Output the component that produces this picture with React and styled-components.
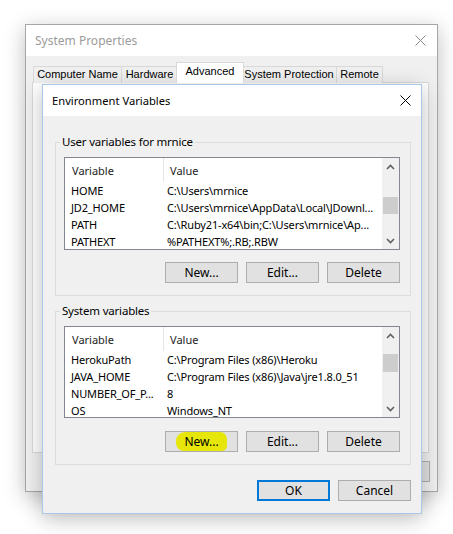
import styled, { createGlobalStyle } from 'styled-components';

const UI = `"Noto Sans", "Segoe UI", sans-serif`;
const CLASSIC = `"Liberation Sans", Arial, sans-serif`;

const GlobalStyle = createGlobalStyle`
  html, body { margin: 0; padding: 0; background: #fff; }
  body { font-family: ${UI}; font-size: 11px; color: #000; }
  * { box-sizing: border-box; }
`;

const Desktop = styled.div`
  position: relative;
  width: 453px;
  height: 534px;
  overflow: hidden;
  background: #fff;
`;

// windows sit on a free canvas, so they get coordinates
const Window = styled.div`
  position: absolute;
  left: ${(p) => p.$x}px;
  top: ${(p) => p.$y}px;
  width: ${(p) => p.$w}px;
  height: ${(p) => p.$h}px;
  display: flex;
  flex-direction: column;
  background: #f0f0f0;
  border: 1px solid ${(p) => (p.$active ? '#a9c8e8' : '#a6a6a6')};
  box-shadow: 0 5px 20px rgba(0, 0, 0, 0.26);
`;

const TitleBar = styled.div`
  height: 31px;
  flex: none;
  display: flex;
  align-items: center;
  background: #fff;
  padding-left: 9px;
`;

const Title = styled.div`
  flex: 1;
  font-size: ${(p) => (p.$active ? 11.2 : 12)}px;
  color: ${(p) => (p.$active ? '#000' : '#9b9b9b')};
`;

const CloseButton = styled.div`
  width: 31px;
  height: 31px;
  margin-right: ${(p) => (p.$active ? 0 : 1)}px;
  display: flex;
  align-items: center;
  justify-content: center;
`;

const TabRow = styled.div`
  display: flex;
  align-items: flex-end;
  height: 27px;
  padding: 0 0 0 8px;
`;

const Tab = styled.div`
  position: relative;
  width: ${(p) => p.$w}px;
  height: ${(p) => (p.$selected ? 21 : 17)}px;
  margin: ${(p) => (p.$selected ? '0 -2px 0 -2px' : '0 0 0 -1px')};
  z-index: ${(p) => (p.$selected ? 1 : 0)};
  border: 1px solid #d9d9d9;
  border-bottom: none;
  background: ${(p) => (p.$selected ? '#fff' : '#f0f0f0')};
  font-family: ${CLASSIC};
  font-size: 11px;
  line-height: ${(p) => (p.$selected ? 16 : 15)}px;
  text-align: center;
  white-space: nowrap;
`;

const TabPanel = styled.div`
  height: 371px;
  margin: -1px 8px 0 6px;
  border: 1px solid #d9d9d9;
  background: #fff;
`;

const OuterButtons = styled.div`
  display: flex;
  justify-content: flex-end;
  gap: 6px;
  margin-top: 8px;
  padding-right: 7px;
`;

const Body = styled.div`
  display: flex;
  flex-direction: column;
  padding: 18px 10px 0 12px;
`;

const Group = styled.fieldset`
  margin: ${(p) => (p.$first ? 0 : '7px 0 0 0')};
  padding: 7px 10px 12px 8px;
  border: 1px solid #dcdcdc;
  min-width: 0;
`;

const Legend = styled.legend`
  margin-left: -4px;
  padding: 0 2px;
  font-size: 11.5px;
  letter-spacing: -0.2px;
  line-height: 16px;
`;

const ListView = styled.div`
  display: flex;
  height: ${(p) => p.$h}px;
  border: 1px solid #828790;
  background: #fff;
`;

const ListBody = styled.div`
  flex: 1;
  min-width: 0;
  overflow: hidden;
`;

const HeaderRow = styled.div`
  display: grid;
  grid-template-columns: 99px 1fr;
  height: 24px;
`;

const HeaderCell = styled.div`
  display: flex;
  align-items: center;
  padding-left: ${(p) => (p.$first ? 7 : 6)}px;
  border-right: ${(p) => (p.$first ? '1px solid #e5e5e5' : 'none')};
  color: #222;
  font-size: 11px;
`;

const Row = styled.div`
  display: grid;
  grid-template-columns: 99px 1fr;
  height: 17px;
  align-items: center;
`;

const Cell = styled.div`
  padding-left: ${(p) => (p.$first ? 6 : 3)}px;
  white-space: nowrap;
  font-size: 11px;
  letter-spacing: -0.15px;
`;

const ScrollBar = styled.div`
  width: 17px;
  flex: none;
  display: flex;
  flex-direction: column;
  background: #f0f0f0;
`;

const Arrow = styled.div`
  height: 17px;
  flex: none;
  display: flex;
  align-items: center;
  justify-content: center;
`;

const Track = styled.div`
  flex: 1;
`;

const Thumb = styled.div`
  margin: ${(p) => p.$top}px 1px 0 1px;
  height: ${(p) => p.$h}px;
  background: #cdcdcd;
`;

const ButtonRow = styled.div`
  display: flex;
  justify-content: flex-end;
  gap: 8px;
  margin-top: ${(p) => p.$top}px;
`;

const Button = styled.div`
  width: ${(p) => p.$w || 73}px;
  height: 21px;
  display: flex;
  align-items: center;
  justify-content: center;
  background: #e1e1e1;
  border: ${(p) => (p.$primary ? '2px solid #0078d7' : '1px solid #adadad')};
  font-size: 12px;
`;

const Footer = styled.div`
  display: flex;
  justify-content: flex-end;
  gap: 8px;
  margin-top: 15px;
`;

const Highlight = styled.span`
  display: inline-block;
  height: 19px;
  line-height: 19px;
  padding: 0 8px 0 8px;
  background: #e6e60a;
  border-radius: 9px 7px 5px 8px;
`;

const XIcon = ({ color }) => (
  <svg width="11" height="11" viewBox="0 0 11 11">
    <path d="M0.5 0.5 L10.5 10.5 M10.5 0.5 L0.5 10.5" stroke={color} strokeWidth="1" />
  </svg>
);

const Chevron = ({ down }) => (
  <svg width="9" height="6" viewBox="0 0 9 6">
    <polyline
      points={down ? '1,1 4.5,4.5 8,1' : '1,5 4.5,1.5 8,5'}
      fill="none"
      stroke="#606060"
      strokeWidth="1.6"
    />
  </svg>
);

const userVars = [
  ['HOME', 'C:\\Users\\mrnice'],
  ['JD2_HOME', 'C:\\Users\\mrnice\\AppData\\Local\\JDownl...'],
  ['PATH', 'C:\\Ruby21-x64\\bin;C:\\Users\\mrnice\\Ap...'],
  ['PATHEXT', '%PATHEXT%;.RB;.RBW'],
];

const systemVars = [
  ['HerokuPath', 'C:\\Program Files (x86)\\Heroku'],
  ['JAVA_HOME', 'C:\\Program Files (x86)\\Java\\jre1.8.0_51'],
  ['NUMBER_OF_P...', '8'],
  ['OS', 'Windows_NT'],
];

function VarList({ rows, height, thumbTop, thumbHeight }) {
  return (
    <ListView $h={height}>
      <ListBody>
        <HeaderRow>
          <HeaderCell $first>Variable</HeaderCell>
          <HeaderCell>Value</HeaderCell>
        </HeaderRow>
        {rows.map(([name, value]) => (
          <Row key={name}>
            <Cell $first>{name}</Cell>
            <Cell>{value}</Cell>
          </Row>
        ))}
      </ListBody>
      <ScrollBar>
        <Arrow>
          <Chevron />
        </Arrow>
        <Track>
          <Thumb $top={thumbTop} $h={thumbHeight} />
        </Track>
        <Arrow>
          <Chevron down />
        </Arrow>
      </ScrollBar>
    </ListView>
  );
}

const tabs = [
  ['Computer Name', 89],
  ['Hardware', 57],
  ['Advanced', 68],
  ['System Protection', 96],
  ['Remote', 47],
];

export default function App() {
  return (
    <Desktop>
      <GlobalStyle />

      <Window $x={25} $y={24} $w={413} $h={468}>
        <TitleBar>
          <Title>System Properties</Title>
          <CloseButton>
            <XIcon color="#8a8a8a" />
          </CloseButton>
        </TitleBar>
        <TabRow>
          {tabs.map(([label, w]) => (
            <Tab key={label} $w={w} $selected={label === 'Advanced'}>
              {label}
            </Tab>
          ))}
        </TabRow>
        <TabPanel />
        <OuterButtons>
          <Button $w={75}>OK</Button>
          <Button $w={75}>Cancel</Button>
          <Button $w={75}>Apply</Button>
        </OuterButtons>
      </Window>

      <Window $x={42} $y={84} $w={380} $h={430} $active>
        <TitleBar>
          <Title $active>Environment Variables</Title>
          <CloseButton $active>
            <XIcon color="#000" />
          </CloseButton>
        </TitleBar>
        <Body>
          <Group $first>
            <Legend>User variables for mrnice</Legend>
            <VarList rows={userVars} height={93} thumbTop={22} thumbHeight={17} />
            <ButtonRow $top={12}>
              <Button>New...</Button>
              <Button>Edit...</Button>
              <Button>Delete</Button>
            </ButtonRow>
          </Group>
          <Group>
            <Legend>System variables</Legend>
            <VarList rows={systemVars} height={92} thumbTop={10} thumbHeight={18} />
            <ButtonRow $top={13}>
              <Button>
                <Highlight>New...</Highlight>
              </Button>
              <Button>Edit...</Button>
              <Button>Delete</Button>
            </ButtonRow>
          </Group>
          <Footer>
            <Button $primary>OK</Button>
            <Button>Cancel</Button>
          </Footer>
        </Body>
      </Window>
    </Desktop>
  );
}
